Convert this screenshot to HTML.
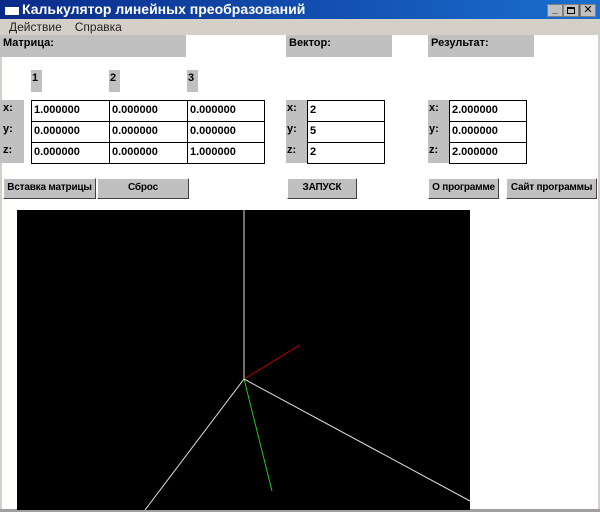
<!DOCTYPE html>
<html><head><meta charset="utf-8"><style>
*{margin:0;padding:0;box-sizing:border-box}
body{width:600px;height:512px;background:#fff;position:relative;overflow:hidden;font-family:"Liberation Sans","DejaVu Sans",sans-serif;font-size:11px;font-weight:bold}
.a{position:absolute}
.g{background:#c0c0c0}
.c{position:absolute;background:#fff;border:1px solid #000;height:22px;padding:3px 0 0 2px;font-size:11px}
.l{position:absolute;font-size:11px}
.b{position:absolute;background:#c0c0c0;border:1px solid;border-color:#fff #404040 #404040 #fff;height:21px;text-align:center;line-height:18px;font-size:10px;white-space:nowrap;overflow:hidden;letter-spacing:-0.2px}
</style></head><body>
<div class="a" style="left:0;top:0;width:600px;height:19px;background:linear-gradient(90deg,#0a2a8a,#1a6fd0);color:#fff;font-size:14px;line-height:19px;padding-left:22px">Калькулятор линейных преобразований</div>
<div class="a" style="left:5px;top:5px;width:14px;height:10px;background:#fff;border-top:2px solid #0a2a8a"></div>
<div class="a g" style="left:547px;top:4px;width:16px;height:13px;border:1px solid #808080;font-size:10px;line-height:9px;text-align:center">_</div>
<div class="a g" style="left:563px;top:4px;width:16px;height:13px;border:1px solid #808080"><div style="margin:2px 3px;width:8px;height:7px;border:1px solid #000;border-top-width:2px"></div></div>
<div class="a g" style="left:580px;top:4px;width:16px;height:13px;border:1px solid #808080;font-size:11px;line-height:11px;text-align:center">✕</div>
<div class="a" style="left:0;top:19px;width:600px;height:16px;background:#d4d0c8;font-weight:normal;font-size:12px;line-height:16px;color:#222"><span style="margin-left:9px">Действие</span><span style="margin-left:13px">Справка</span></div>
<div class="a" style="left:0;top:35px;width:2px;height:477px;background:#d4d0c8"></div>
<div class="a" style="left:598px;top:35px;width:2px;height:477px;background:#d4d0c8"></div>
<div class="a" style="left:0;top:509px;width:600px;height:3px;background:#a0a0a0"></div>

<div class="a g" style="left:0;top:35px;width:186px;height:22px;padding:2px 3px">Матрица:</div>
<div class="a g" style="left:286px;top:35px;width:106px;height:22px;padding:2px 3px">Вектор:</div>
<div class="a g" style="left:428px;top:35px;width:106px;height:22px;padding:2px 3px">Результат:</div>

<div class="a g" style="left:31px;top:70px;width:11px;height:22px;padding:2px 1px">1</div>
<div class="a g" style="left:109px;top:70px;width:11px;height:22px;padding:2px 1px">2</div>
<div class="a g" style="left:187px;top:70px;width:11px;height:22px;padding:2px 1px">3</div>

<div class="a g" style="left:0;top:100px;width:24px;height:63px"></div>
<div class="a g" style="left:286px;top:100px;width:21px;height:63px"></div>
<div class="a g" style="left:428px;top:100px;width:21px;height:63px"></div>
<div class="l" style="left:3px;top:102px">x:</div><div class="l" style="left:3px;top:123px">y:</div><div class="l" style="left:3px;top:144px">z:</div>
<div class="l" style="left:287px;top:102px">x:</div><div class="l" style="left:287px;top:123px">y:</div><div class="l" style="left:287px;top:144px">z:</div>
<div class="l" style="left:429px;top:102px">x:</div><div class="l" style="left:429px;top:123px">y:</div><div class="l" style="left:429px;top:144px">z:</div>

<div class="c" style="left:31px;top:100px;width:79px">1.000000</div>
<div class="c" style="left:109px;top:100px;width:79px">0.000000</div>
<div class="c" style="left:187px;top:100px;width:78px">0.000000</div>
<div class="c" style="left:31px;top:121px;width:79px">0.000000</div>
<div class="c" style="left:109px;top:121px;width:79px">0.000000</div>
<div class="c" style="left:187px;top:121px;width:78px">0.000000</div>
<div class="c" style="left:31px;top:142px;width:79px">0.000000</div>
<div class="c" style="left:109px;top:142px;width:79px">0.000000</div>
<div class="c" style="left:187px;top:142px;width:78px">1.000000</div>

<div class="c" style="left:307px;top:100px;width:78px">2</div>
<div class="c" style="left:307px;top:121px;width:78px">5</div>
<div class="c" style="left:307px;top:142px;width:78px">2</div>
<div class="c" style="left:449px;top:100px;width:78px">2.000000</div>
<div class="c" style="left:449px;top:121px;width:78px">0.000000</div>
<div class="c" style="left:449px;top:142px;width:78px">2.000000</div>

<div class="b" style="left:3px;top:178px;width:93px">Вставка матрицы</div>
<div class="b" style="left:97px;top:178px;width:92px">Сброс</div>
<div class="b" style="left:287px;top:178px;width:70px">ЗАПУСК</div>
<div class="b" style="left:428px;top:178px;width:71px">О программе</div>
<div class="b" style="left:506px;top:178px;width:91px">Сайт программы</div>

<svg class="a" style="left:17px;top:210px" width="453" height="300">
<rect width="453" height="300" fill="#000"/>
<g stroke-width="1">
<line x1="227" y1="169" x2="227" y2="0" stroke="#ddd"/>
<line x1="227" y1="169" x2="283" y2="135" stroke="#c00000"/>
<line x1="227" y1="169" x2="255" y2="281" stroke="#22cc22"/>
<line x1="227" y1="169" x2="128" y2="300" stroke="#ddd"/>
<line x1="227" y1="169" x2="453" y2="291" stroke="#ddd"/>
</g></svg>
</body></html>
